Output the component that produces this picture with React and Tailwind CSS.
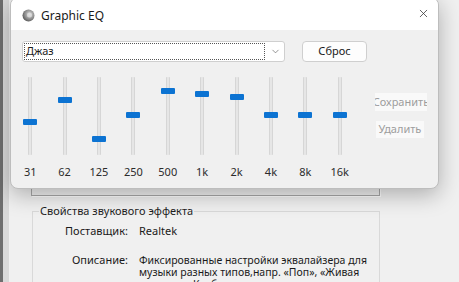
import React from 'react';
import { X, ChevronDown } from 'lucide-react';

const TRACK_TOP = 77;

// thumb centre (page y) for each band
const bands = [
  { label: '31', y: 122 },
  { label: '62', y: 100 },
  { label: '125', y: 139 },
  { label: '250', y: 115 },
  { label: '500', y: 91 },
  { label: '1k', y: 94 },
  { label: '2k', y: 97 },
  { label: '4k', y: 115 },
  { label: '8k', y: 115 },
  { label: '16k', y: 115 },
];

const SpeakerIcon = () => (
  <svg width="13" height="13" viewBox="0 0 13 13">
    <defs>
      <radialGradient id="spk" cx="0.6" cy="0.4" r="0.7">
        <stop offset="0" stopColor="#d8d8d8" />
        <stop offset="0.6" stopColor="#8a8a8a" />
        <stop offset="1" stopColor="#4a4a4a" />
      </radialGradient>
    </defs>
    <circle cx="6.5" cy="6.5" r="6" fill="url(#spk)" />
    <circle cx="7.5" cy="6" r="2.5" fill="#e6e6e6" opacity="0.7" />
  </svg>
);

const Band = ({ label, y }) => (
  <div className="flex w-[34.4px] flex-col items-center">
    <div className="relative flex h-[78px] w-[14px] justify-center">
      <div className="h-full w-[4px] rounded-[1px] border-x border-[#d6d6d6] bg-[#e6e6e6]" />
      <div
        className="absolute left-0 h-[6px] w-[14px] rounded-[1px] bg-[#0c73d2]"
        style={{ top: y - TRACK_TOP - 3 }}
      />
    </div>
    <div className="mt-[11px] text-[11px] leading-[12px] text-[#2b2b2b]">{label}</div>
  </div>
);

const EqDialog = () => (
  <div className="absolute left-[10px] top-[-3px] flex h-[192px] w-[429px] flex-col overflow-hidden rounded-[8px] border border-[#bdbdbd] bg-[#f0f0f0] shadow-[0_6px_22px_rgba(0,0,0,0.28)]">
    {/* Title bar */}
    <div className="flex h-[32px] shrink-0 items-center bg-white pl-[11px] pr-[8px] pt-[3px]">
      <SpeakerIcon />
      <span className="ml-[6px] text-[12px] text-[#1a1a1a]">Graphic EQ</span>
      <X className="ml-auto mt-[-4px] h-[13px] w-[13px] text-[#333]" strokeWidth={1.4} />
    </div>

    {/* Body */}
    <div className="flex flex-col pt-[11px]">
      <div className="flex items-center pl-[11px]">
        <div className="flex h-[21px] w-[263px] items-stretch rounded-[3px] border border-[#cfcfcf] bg-white">
          <div className="m-[1px] flex flex-1 items-center border border-dotted border-[#555] pl-[1px] text-[11px] text-[#1a1a1a]">
            Джаз
          </div>
          <div className="flex w-[18px] items-center justify-center">
            <ChevronDown className="h-[11px] w-[11px] text-[#666]" strokeWidth={1.5} />
          </div>
        </div>
        <button className="ml-[17px] flex h-[21px] w-[65px] items-center justify-center rounded-[4px] border border-[#cfcfcf] bg-[#fdfdfd] text-[11px] text-[#1a1a1a]">
          Сброс
        </button>
      </div>

      <div className="mt-[15px] flex pl-[2px]">
        {bands.map((b) => (
          <Band key={b.label} label={b.label} y={b.y} />
        ))}
        <div className="ml-[18px] mt-[16px] flex flex-col gap-[10px]">
          <div className="flex h-[18px] w-[52px] items-center justify-center overflow-hidden whitespace-nowrap bg-[#f9f9f9] text-[11px] text-[#9d9d9d]">
            <span className="shrink-0">Сохранить</span>
          </div>
          <div className="ml-[1px] flex h-[17px] w-[48px] items-center justify-center overflow-hidden whitespace-nowrap bg-[#f9f9f9] text-[11px] text-[#9d9d9d]">
            Удалить
          </div>
        </div>
      </div>
    </div>
  </div>
);

export default function App() {
  return (
    <div className="relative h-[282px] w-[459px] overflow-hidden bg-[#f0f0f0] font-['Noto_Sans',sans-serif] text-[#1a1a1a]">
      {/* Background properties window */}
      <div className="flex h-full">
        <div className="w-[3px] shrink-0 bg-[#6e6e6e]" />
        <div className="w-[6px] shrink-0 bg-[#d9d9d9]" />
        <div className="flex flex-1 flex-col pl-[22px]">
          <div className="h-[196px] w-[349px] shrink-0 border border-[#a9a9a9] shadow-[1px_1px_0_#ffffff]" />
          <fieldset className="ml-[1px] mt-[9px] w-[348px] border border-[#d9d9d9] pb-[20px]">
            <legend className="ml-[6px] px-[1px] text-[11px] leading-[12px] text-[#1f1f1f]">
              Свойства звукового эффекта
            </legend>
            <div className="flex flex-col gap-[17px] pt-[8px] text-[10.5px] leading-[12px]">
              <div className="flex">
                <div className="w-[95px] text-right text-[11px]">Поставщик:</div>
                <div className="ml-[11px] text-[11px]">Realtek</div>
              </div>
              <div className="flex">
                <div className="w-[95px] text-right text-[11px]">Описание:</div>
                <div className="ml-[11px] flex flex-col whitespace-nowrap">
                  <span>Фиксированные настройки эквалайзера для</span>
                  <span>музыки разных типов,напр. «Поп», «Живая</span>
                  <span>музыка», «Клуб» и т.д.</span>
                </div>
              </div>
            </div>
          </fieldset>
        </div>
      </div>

      <EqDialog />
    </div>
  );
}
